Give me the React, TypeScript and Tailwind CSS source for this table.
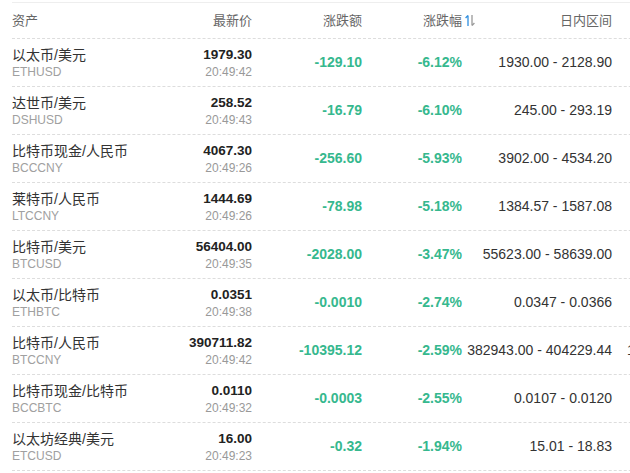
import React from "react";

interface IRow {
  name: string;
  symbol: string;
  price: string;
  time: string;
  change: string;
  percent: string;
  range: string;
  extra?: string;
}

const rows: IRow[] = [
  { name: "以太币/美元", symbol: "ETHUSD", price: "1979.30", time: "20:49:42", change: "-129.10", percent: "-6.12%", range: "1930.00 - 2128.90" },
  { name: "达世币/美元", symbol: "DSHUSD", price: "258.52", time: "20:49:43", change: "-16.79", percent: "-6.10%", range: "245.00 - 293.19" },
  { name: "比特币现金/人民币", symbol: "BCCCNY", price: "4067.30", time: "20:49:26", change: "-256.60", percent: "-5.93%", range: "3902.00 - 4534.20" },
  { name: "莱特币/人民币", symbol: "LTCCNY", price: "1444.69", time: "20:49:26", change: "-78.98", percent: "-5.18%", range: "1384.57 - 1587.08" },
  { name: "比特币/美元", symbol: "BTCUSD", price: "56404.00", time: "20:49:35", change: "-2028.00", percent: "-3.47%", range: "55623.00 - 58639.00" },
  { name: "以太币/比特币", symbol: "ETHBTC", price: "0.0351", time: "20:49:38", change: "-0.0010", percent: "-2.74%", range: "0.0347 - 0.0366" },
  { name: "比特币/人民币", symbol: "BTCCNY", price: "390711.82", time: "20:49:42", change: "-10395.12", percent: "-2.59%", range: "382943.00 - 404229.44", extra: "1" },
  { name: "比特币现金/比特币", symbol: "BCCBTC", price: "0.0110", time: "20:49:32", change: "-0.0003", percent: "-2.55%", range: "0.0107 - 0.0120" },
  { name: "以太坊经典/美元", symbol: "ETCUSD", price: "16.00", time: "20:49:23", change: "-0.32", percent: "-1.94%", range: "15.01 - 18.83" },
];

function SortIcon() {
  return (
    <svg width="10" height="13" viewBox="0 0 10 13" fill="none" className="shrink-0">
      <path d="M3 12V1.5M0.6 4L3 1.4" stroke="#2f8fe0" strokeWidth="1.3" />
      <path d="M7 1V11.5M9.4 9L7 11.6" stroke="#999999" strokeWidth="1.3" />
    </svg>
  );
}

const cols = "grid grid-cols-[140px_100px_110px_100px_150px_40px]";

export default function App() {
  return (
    <div
      className="w-[630px] h-[473px] overflow-hidden bg-white pl-3 pt-[2px]"
      style={{ fontFamily: '"Liberation Sans", Arial, "Noto Sans CJK SC", sans-serif' }}
    >
      <div className="border-t border-[#eeeeee] w-[700px]">
        <div className={`${cols} h-[36px] items-center text-[13px] text-[#666666] border-b border-dashed border-[#dddddd]`}>
          <div>资产</div>
          <div className="text-right">最新价</div>
          <div className="text-right">涨跌额</div>
          <div className="flex justify-end items-center -mr-[13px]">
            <span>涨跌幅</span>
            <span className="ml-[3px]">
              <SortIcon />
            </span>
          </div>
          <div className="text-right">日内区间</div>
          <div />
        </div>
        {rows.map((r) => (
          <div
            key={r.symbol}
            className={`${cols} h-[48px] items-center border-b border-dashed border-[#dddddd]`}
          >
            <div className="flex flex-col">
              <span className="text-[14px] leading-[18px] text-[#333333] whitespace-nowrap">{r.name}</span>
              <span className="text-[12px] leading-[16px] text-[#a0a0a0]">{r.symbol}</span>
            </div>
            <div className="flex flex-col items-end">
              <span className="text-[13.5px] leading-[18px] font-bold text-[#222222] whitespace-nowrap">{r.price}</span>
              <span className="text-[12px] leading-[16px] text-[#999999]">{r.time}</span>
            </div>
            <div className="text-right text-[14px] font-bold text-[#36b88e] whitespace-nowrap">{r.change}</div>
            <div className="text-right text-[14px] font-bold text-[#36b88e] whitespace-nowrap">{r.percent}</div>
            <div className="text-right text-[14px] text-[#333333] whitespace-nowrap">{r.range}</div>
            <div className="pl-[15px] text-[14px] text-[#333333]">{r.extra}</div>
          </div>
        ))}
      </div>
    </div>
  );
}
